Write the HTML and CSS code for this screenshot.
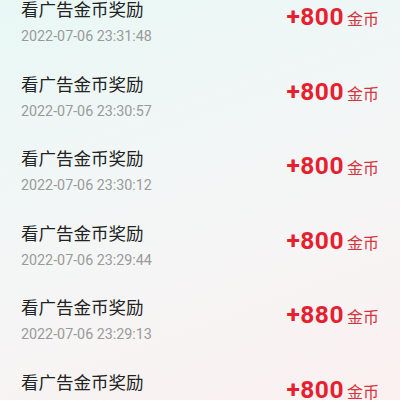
FILE: index.html
```html
<!DOCTYPE html>
<html lang="zh-CN">

<head>
  <meta charset="UTF-8">
  <meta name="viewport" content="width=device-width, initial-scale=1.0">
  <title>金币明细</title>
  <link rel="stylesheet" href="styles.css">
</head>

<body>
  <div class="screen">
    <ul class="record-list">
      <li class="record">
        <div class="record-info">
          <div class="record-title">看广告金币奖励</div>
          <div class="record-time">2022-07-06 23:31:48</div>
        </div>
        <div class="record-amount"><span class="amount-num">+800</span><span class="amount-unit">金币</span></div>
      </li>
      <li class="record">
        <div class="record-info">
          <div class="record-title">看广告金币奖励</div>
          <div class="record-time">2022-07-06 23:30:57</div>
        </div>
        <div class="record-amount"><span class="amount-num">+800</span><span class="amount-unit">金币</span></div>
      </li>
      <li class="record">
        <div class="record-info">
          <div class="record-title">看广告金币奖励</div>
          <div class="record-time">2022-07-06 23:30:12</div>
        </div>
        <div class="record-amount"><span class="amount-num">+800</span><span class="amount-unit">金币</span></div>
      </li>
      <li class="record">
        <div class="record-info">
          <div class="record-title">看广告金币奖励</div>
          <div class="record-time">2022-07-06 23:29:44</div>
        </div>
        <div class="record-amount"><span class="amount-num">+800</span><span class="amount-unit">金币</span></div>
      </li>
      <li class="record">
        <div class="record-info">
          <div class="record-title">看广告金币奖励</div>
          <div class="record-time">2022-07-06 23:29:13</div>
        </div>
        <div class="record-amount"><span class="amount-num">+880</span><span class="amount-unit">金币</span></div>
      </li>
      <li class="record">
        <div class="record-info">
          <div class="record-title">看广告金币奖励</div>
          <div class="record-time">2022-07-06 23:28:41</div>
        </div>
        <div class="record-amount"><span class="amount-num">+800</span><span class="amount-unit">金币</span></div>
      </li>
    </ul>
  </div>
</body>

</html>
```

FILE: styles.css
```css
body {
  margin: 0;
  background-color: #fff;
  font-family: Roboto, "Noto Sans CJK SC", sans-serif;
}

.screen {
  width: 400px;
  height: 400px;
  overflow: hidden;
  background: linear-gradient(160deg, #e8f8f5 0%, #f3f6f6 45%, #f7f4f4 70%, #fbf0f0 100%);
}

.record-list {
  list-style: none;
  margin: -2px 0 0;
  padding: 0;
}

.record {
  display: flex;
  justify-content: space-between;
  align-items: flex-start;
  height: 74.5px;
  padding: 0 21px;
}

.record-title {
  font-family: "Noto Sans CJK SC", sans-serif;
  font-size: 17.5px;
  line-height: 22px;
  color: #222;
}

.record-time {
  margin-top: 7px;
  font-size: 14.3px;
  line-height: 18px;
  color: #9a9a9a;
}

.record-amount {
  margin-top: 5px;
  line-height: 28px;
  color: #e6202e;
}

.amount-num {
  font-size: 24.5px;
  font-weight: 700;
  letter-spacing: 0.5px;
}

.amount-unit {
  margin-left: 3px;
  font-family: "Noto Sans CJK SC", sans-serif;
  font-size: 16px;
  color: #d6343d;
}
```
